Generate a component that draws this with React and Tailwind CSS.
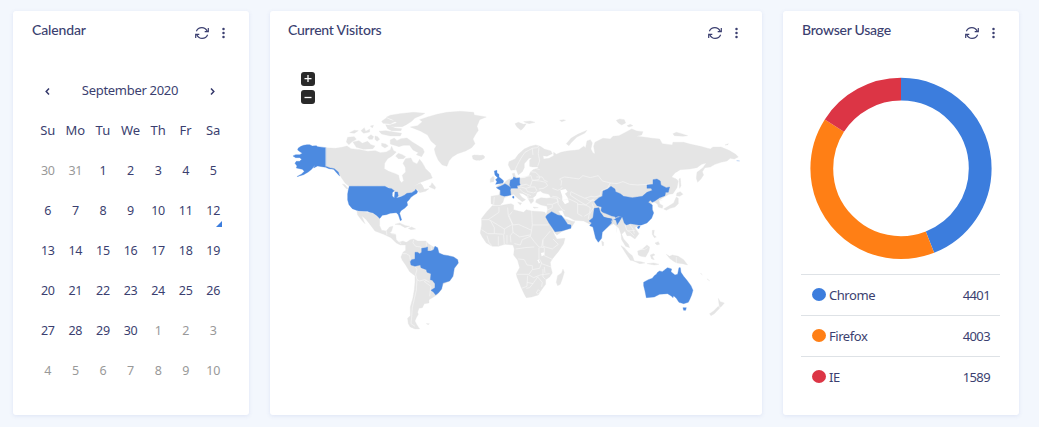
import React from "react";

const LAND = "#e5e5e5";
const ACTIVE = "#4c8ae0";

const northAmerica = [
  // Canadian mainland
  "136,157 165,159 185,156 200,152 212,160 240,163 262,168 285,166 300,172 318,170 330,163 334,153 340,166 348,170 340,178 332,184 322,190 313,204 312,220 325,228 345,235 355,240 358,255 364,262 370,256 366,240 376,230 375,216 368,204 376,190 392,188 398,200 410,206 418,192 426,202 436,220 450,234 456,248 440,254 418,262 402,272 420,264 426,270 432,282 446,280 436,288 418,292 411,282 405,286 390,292 375,300 355,303 330,278 315,272 206,273 195,264 184,248 174,232 155,219 136,214",
  // Arctic islands
  "198,140 202,126 222,124 228,132 214,140 206,148",
  "218,140 236,136 246,144 262,138 272,148 284,152 278,160 250,162 228,156",
  "208,112 222,105 234,106 222,114",
  "242,106 252,97 256,108 268,102 268,110 250,114",
  "270,92 280,90 276,98",
  "262,126 272,118 280,124 276,132 266,132",
  "284,122 292,124 298,132 290,138 284,132",
  "296,108 316,106 340,110 364,114 360,122 330,122 304,116",
  "304,78 318,68 332,74 346,78 330,86 308,84",
  "318,66 330,60 358,55 400,51 434,54 424,60 404,68 394,78 378,88 366,94 340,94 326,90 350,82 334,72",
  "316,88 328,90 344,98 364,100 362,106 334,106 322,100",
  "304,144 316,146 324,152 314,158 304,152",
  "330,134 342,128 350,136 362,130 380,128 396,140 412,150 428,160 432,170 424,184 408,178 414,172 398,164 388,150 370,150 356,154 342,150 330,146",
  "346,182 354,174 366,178 376,184 370,190 354,190",
  "455,262 466,276 464,282 446,274 452,270",
  "186,266 194,268 204,280 198,280",
];

const greenland =
  "210,80 232,76 246,64 238,58 262,50 290,42 320,36 360,33 400,36 402,44 438,50 418,58 410,78 414,90 406,102 398,116 404,130 394,142 376,152 352,160 336,170 326,182 320,198 306,194 294,180 286,162 282,146 288,136 272,122 262,104 240,92";

const centralAmerica = [
  "396,168 402,164 412,168 428,164 434,170 424,178 408,180 398,176",
  "50,332 96,338 108,346 118,356 118,376 124,390 138,392 148,380 158,378 154,392 148,398 166,402 168,418 176,426 188,422 202,428 196,434 180,434 168,428 152,412 130,402 104,392 92,376 78,358 64,346 74,370 66,362 52,344",
  "164,372 178,368 196,376 208,378 194,382 180,374",
  "204,384 214,380 226,386 212,388",
];

const alaska =
  "136,157 112,154 108,151 96,152 88,148 80,148 70,150 62,153 54,158 52,164 60,170 66,174 58,178 46,178 38,182 46,187 58,187 64,192 58,198 48,198 44,204 50,212 48,218 58,220 66,222 72,228 64,236 50,244 70,238 84,230 94,222 104,210 100,218 112,212 124,214 136,216 146,220 160,222 170,234 178,242 174,230 162,220 150,218 136,213";

const unitedStates =
  "207,273 314,273 324,278 334,280 342,286 336,292 336,302 342,308 344,290 352,290 354,302 348,308 362,304 372,300 380,294 394,292 404,286 406,282 412,288 410,294 400,300 392,306 386,314 380,320 382,330 374,338 362,346 358,354 364,374 360,376 354,358 348,352 330,354 318,358 306,360 298,370 290,362 278,354 270,352 262,348 236,348 216,340 206,328 202,314 202,296 204,284";

const southAmerica =
  "90,88 100,86 112,92 136,92 146,102 160,110 168,112 176,128 190,134 204,136 220,140 232,148 234,158 222,174 218,198 208,212 188,222 182,240 172,252 160,260 146,268 146,278 132,280 126,292 116,294 112,306 114,312 108,322 104,332 110,344 118,356 104,356 90,350 84,340 82,324 90,316 90,290 98,262 102,238 104,216 104,196 88,184 76,164 66,150 62,140 68,126 76,120 76,98";
const brazil =
  "104,126 112,126 118,130 124,126 124,114 136,112 142,110 142,122 152,122 160,118 164,108 172,112 176,128 190,134 204,136 220,140 232,148 234,158 222,174 218,198 208,212 188,218 184,236 174,248 166,254 160,246 152,240 164,232 164,220 156,210 150,208 152,190 140,186 138,178 122,172 120,164 104,168 92,164 90,154 94,148 104,146";
const southBorders = [
  "100,88 98,98 106,108 122,110 122,116",
  "66,130 78,130 88,136 90,148",
  "104,168 110,178 106,192 110,208 118,212 134,208 148,216",
  "110,208 108,240 102,266 96,292 94,320 92,340 104,348",
  "138,210 132,214 152,228 150,240 148,258",
  "138,94 138,108",
  "152,106 154,120",
];

const eurasiaLand = [
  // Scandinavia through Siberia, southern edge closed along the Middle East and Asia
  "114,164 116,154 134,146 144,132 162,116 180,108 196,104 210,108 222,116 242,122 246,130 230,138 218,136 220,146 236,144 250,136 250,126 258,132 272,126 290,122 312,120 326,118 340,108 346,112 350,92 360,88 366,98 362,116 368,128 374,130 370,108 374,96 386,90 398,84 420,86 428,78 446,76 466,66 484,56 500,62 518,64 514,74 498,78 520,80 546,84 568,86 576,100 606,104 608,96 640,96 662,102 690,108 720,116 728,110 752,110 776,120 796,132 804,140 792,146 780,144 770,152 752,156 734,162 720,170 704,172 696,184 700,194 692,206 682,216 678,204 680,186 698,172 708,158 694,162 680,172 658,176 630,178 614,188 604,200 618,206 624,212 620,232 608,250 596,252 578,262 566,270 568,280 578,286 576,294 564,290 562,282 554,276 544,276 544,290 550,306 536,328 516,342 504,346 494,352 506,370 494,386 480,376 470,376 464,362 454,372 460,386 474,402 478,412 466,408 454,388 452,372 446,354 430,340 416,348 394,364 392,380 386,394 376,378 366,346 352,338 340,332 312,330 294,320 284,318 276,300 264,302 274,318 286,326 304,332 314,334 304,350 274,364 260,374 252,366 236,342 226,318 232,298 230,288 212,284 196,276 198,268 212,262 230,264 242,262 236,252 218,248 210,242 200,246 196,256 188,262 190,272 182,280 176,270 170,258 158,250 146,248 154,260 166,268 156,274 142,264 130,252 116,256 102,262 98,276 90,284 74,284 62,280 62,258 86,254 90,240 78,230 88,222 102,218 110,210 118,206 130,204 126,190 132,188 136,200 152,204 164,202 176,196 180,186 188,178 202,174 204,170 186,170 178,168 178,150 184,142 176,144 162,160 162,172 156,184 144,194 138,178 122,180",
  // Arctic islands
  "134,40 144,36 160,42 168,40 160,52 152,60 140,50",
  "160,34 180,32 194,36 176,40",
  "268,30 280,28 286,30 274,34",
  "288,100 302,84 322,72 350,60 344,68 320,80 302,98 296,106",
  "438,30 448,26 462,28 466,38 454,44 444,38",
  "470,46 480,42 488,46 476,50",
  "608,70 618,66 634,70 652,76 638,78 612,76",
  "764,104 774,100 772,104",
  "6,136 20,134 40,138 42,144 28,150 14,148",
  // British Isles and the Mediterranean
  "60,206 68,198 72,202 70,214 60,216",
  "142,276 154,278 150,284",
  "188,290 204,292 192,294",
  // Japan and Sakhalin
  "626,206 630,204 632,226 628,234",
  "620,248 630,244 638,252 628,258 618,256",
  "618,260 624,264 624,280 614,290 600,294 588,300 580,296 594,288 610,278",
  // Madagascar, Sri Lanka
  "278,476 282,486 276,506 270,522 262,526 258,516 262,496 274,488",
  "394,392 400,396 400,406 396,406",
  // Indonesian and Philippine islands
  "452,406 462,412 476,428 486,436 492,452 480,450 468,432",
  "490,452 512,454 524,458 508,460",
  "502,422 514,418 530,404 538,410 536,422 526,440 512,438 504,434",
  "540,434 550,430 554,434 546,438 552,448 544,446",
  "546,360 552,360 550,374 558,380 552,382 546,372",
  "554,398 564,394 568,402 560,404",
  "530,460 550,458 566,462 552,464",
  "588,432 598,438 606,434 624,438 640,448 652,464 636,460 620,458 612,454 600,446",
  // New Zealand
  "744,564 750,574 762,578 754,588 748,592 746,580",
  "744,588 748,594 732,610 722,616 718,610 730,602",
  "710,506 718,512 714,508",
  "690,488 696,494 692,490",
];

const africa =
  "66,286 88,286 122,280 130,284 130,298 144,302 160,306 168,298 184,302 216,304 224,306 236,334 246,358 254,376 260,386 284,384 280,400 264,424 246,446 240,456 242,472 246,488 238,500 226,508 226,522 214,538 204,554 184,560 168,562 162,552 152,530 140,500 138,490 148,472 142,450 130,434 132,416 128,404 104,402 84,408 66,408 48,398 36,380 30,368 34,344 34,324 48,306";

const borders = [
  // Africa
  "86,290 86,306 54,328 34,328",
  "54,328 60,330 72,352 72,370 52,370 34,358",
  "60,330 102,356 126,342 114,316 112,292",
  "126,304 116,316 128,344 144,342",
  "184,302 186,344 236,344",
  "144,342 184,360 186,344",
  "126,344 128,366 120,376 122,396",
  "184,360 180,378 192,394 206,410 222,412",
  "128,366 148,380 180,374",
  "72,370 102,372 102,356",
  "84,378 84,406",
  "100,374 102,402",
  "110,374 110,400",
  "50,376 56,396 64,406",
  "132,400 150,404 156,388 180,378",
  "136,416 152,414 164,412 192,410",
  "214,410 218,388 240,362",
  "218,388 218,408 246,416 264,402 248,386",
  "222,412 222,436 248,448",
  "206,412 206,444 214,458 208,474 186,478",
  "144,446 162,448 170,464 186,466 186,478",
  "186,478 176,492 140,492",
  "176,494 190,502 210,494 238,490",
  "172,496 170,528 154,534",
  "170,516 188,520 202,500",
  "202,500 216,516 214,530",
  "188,520 178,532 168,534",
  "214,460 242,470",
  "222,470 224,488",
  "218,476 218,500 226,508",
  "198,548 204,538 210,544 204,552 198,548",
  // Europe
  "134,180 142,162 152,144 164,126 186,114 200,112 206,108",
  "206,112 204,130 208,152 202,168",
  "186,114 188,134",
  "98,256 110,260",
  "126,198 122,204 120,224 122,234",
  "148,204 148,226 168,222 180,228 186,210 182,196 150,202",
  "180,184 196,186 208,198 206,208 186,210",
  "186,210 208,212 226,216 232,226 220,234 206,236",
  "122,236 138,234 152,230 166,234 182,230",
  "148,236 158,246 172,252 182,256",
  "166,234 172,244 190,248 198,244",
  "172,252 174,266 188,264",
  "182,230 194,230 200,242",
  "194,174 208,178",
  "72,260 70,282",
  "198,200 216,200 222,210 232,214",
  // Middle East and Central Asia
  "246,234 262,240 272,236 276,230",
  "242,262 260,264 264,274 246,282 230,282",
  "246,258 260,260 270,266",
  "246,282 246,292 230,300",
  "260,264 264,282 276,298 284,302",
  "276,270 296,266 322,278 322,310 336,318",
  "272,226 274,212 268,206 282,200 298,202 326,206 338,196 360,202 384,196 396,212 420,218",
  "420,218 412,234 392,242 390,256 374,260 362,258 344,264 326,256 302,244 300,256",
  "302,256 326,272 346,284 322,282",
  "346,284 366,270 374,272",
  "346,264 358,272 372,266",
  "346,284 360,292 358,308 342,318",
  "366,280 370,292 356,314 354,326",
  "420,218 440,220 458,214 478,222 502,224 532,222 538,220",
  "274,362 266,348 300,338",
  "440,350 438,366",
  "464,344 470,360 480,366 492,378",
  "476,340 488,356 492,370",
  "472,362 494,360",
  "568,270 576,270",
  "618,440 618,458",
  "510,416 522,418 532,412",
];

const eurasiaActive = [
  // United Kingdom
  "72,182 80,180 80,188 86,192 86,200 94,206 100,212 98,218 86,220 76,222 80,214 76,208 82,202 74,194",
  // France
  "78,232 90,228 98,224 104,220 114,226 122,232 120,240 122,254 112,256 102,258 90,254 90,240",
  "127,258 131,258 131,264 127,263",
  // Germany
  "120,210 128,206 130,200 138,204 148,202 148,218 150,224 140,226 142,234 122,234 118,224",
  // Saudi Arabia
  "226,320 230,314 244,304 262,314 274,316 284,330 292,342 302,344 302,354 274,362 254,364 246,352 236,338",
  // China
  "372,274 386,262 396,258 398,242 412,236 422,228 434,236 436,244 450,250 460,258 486,262 516,258 530,246 546,240 542,234 530,234 530,224 548,222 548,208 560,206 570,212 572,224 588,232 598,230 594,246 586,246 584,256 568,262 554,272 546,276 540,270 534,276 546,284 546,298 550,308 544,324 530,338 514,344 504,344 492,342 480,340 468,344 462,338 456,320 444,318 434,322 412,318 400,312 392,300 394,290 380,286",
  "503,348 510,346 506,355 501,353",
  // India
  "372,294 386,292 390,306 402,320 424,324 428,330 440,322 456,318 448,332 440,344 434,336 422,330 424,338 412,350 396,366 394,384 384,396 376,384 368,350 358,346 364,338 356,332 368,322",
  // Australia
  "520,516 534,508 546,504 552,496 558,492 562,486 568,482 576,484 582,480 586,476 592,472 604,476 602,484 614,494 622,492 626,472 630,472 632,486 640,498 650,510 662,526 668,540 664,554 658,568 654,576 640,580 626,576 618,564 610,556 608,562 604,558 592,550 568,552 552,560 528,562 524,542 520,526",
  "638,592 648,592 646,600 640,600",
];

const nepal = "394,306 406,310 424,318 434,320 434,326 414,322 400,318";
const bangladesh = "425,327 436,330 440,343 430,340";

const Shapes = ({ list, fill }) =>
  list.map((points) => (
    <polygon key={points} points={points} fill={fill} stroke={fill} strokeWidth="1" strokeLinejoin="round" />
  ));

const Borders = ({ list }) =>
  list.map((points) => (
    <polyline key={points} points={points} fill="none" stroke="#f6f6f6" strokeWidth="2" strokeLinejoin="round" />
  ));

function WorldMap() {
  return (
    <svg viewBox="288 100 456 240" className="block h-[240px] w-[456px]" role="img" aria-label="Visitors by country">
      <g transform="translate(280.3 95.3) scale(.33333)">
        <Shapes list={northAmerica} fill={LAND} />
        <Shapes list={[alaska, unitedStates]} fill={ACTIVE} />
        <polyline points="137,156 137,214" stroke="#c9d9ef" strokeWidth="2" />
      </g>
      <g transform="translate(340.3 100.3) scale(.33333)">
        <Shapes list={[greenland, ...centralAmerica]} fill={LAND} />
        <Borders list={["138,392 140,404", "154,400 166,402", "176,420 182,432"]} />
      </g>
      <g transform="translate(380.3 210.3) scale(.33333)">
        <Shapes list={[southAmerica, "138,340 147,340 144,343"]} fill={LAND} />
        <Borders list={southBorders} />
        <Shapes list={[brazil]} fill={ACTIVE} />
      </g>
      <g transform="translate(470.3 110.3) scale(.33333)">
        <Shapes list={[...eurasiaLand, africa]} fill={LAND} />
        {/* Seas and lakes */}
        <polygon points="270,240 286,236 292,244 284,250 292,262 296,276 284,282 276,270 276,258" fill="#fff" />
        <polygon points="212,428 222,426 222,434 214,438" fill="#fff" />
        <polygon points="204,446 208,456 206,460 202,450" fill="#fff" />
        <Borders list={borders} />
        <Shapes list={eurasiaActive} fill={ACTIVE} />
        <Shapes list={[nepal, bangladesh]} fill={LAND} />
        <polyline points="799,151 808,152" stroke={ACTIVE} strokeWidth="1.5" opacity=".7" />
      </g>
    </svg>
  );
}

function HeaderIcons() {
  return (
    <div className="flex items-center">
      <svg viewBox="0 0 14 12" className="h-3 w-3.5" fill="none" stroke="#3b3f70" strokeWidth="1.2">
        <path d="M1.4 4.3C2.3 2 4.4.7 6.9.7c2.3 0 4.1 1.2 5.2 3.4M13.3.9v3.7H9.7M12.6 7.7c-.9 2.3-3 3.6-5.5 3.6-2.3 0-4.1-1.2-5.2-3.4M.7 11.1V7.4h3.6" />
      </svg>
      <svg viewBox="0 0 3 12" className="ml-[13px] h-3 w-[3px]" fill="#3b3f70">
        <circle cx="1.5" cy="2" r="1.25" />
        <circle cx="1.5" cy="6" r="1.25" />
        <circle cx="1.5" cy="10" r="1.25" />
      </svg>
    </div>
  );
}

function Card({ title, width, titleClass, children }) {
  return (
    <section className={`h-[404px] shrink-0 rounded-[3px] bg-white shadow-[0_1px_4px_rgba(70,100,190,0.12)] ${width}`}>
      <header className="flex h-11 items-center justify-between pr-6 pl-[18px]">
        <h2 className={`-mt-[7px] text-[14px] leading-5 font-medium whitespace-nowrap font-['Lato',sans-serif] ${titleClass}`}>
          {title}
        </h2>
        <HeaderIcons />
      </header>
      {children}
    </section>
  );
}

const weekdays = ["Su", "Mo", "Tu", "We", "Th", "Fr", "Sa"];
const days = [
  30, 31, ...Array.from({ length: 30 }, (_, i) => i + 1), ...Array.from({ length: 10 }, (_, i) => i + 1),
];

function Chevron({ d }) {
  return (
    <svg viewBox="0 0 5 7" className="mt-px h-[7px] w-[5px]" fill="none" stroke="#34386a" strokeWidth="1.5">
      <path d={d} />
    </svg>
  );
}

function Calendar() {
  return (
    <div className="mt-4 ml-[21px] w-[193px] text-[13px]">
      <div className="flex h-10 items-center justify-between pr-3 pl-[11px]">
        <Chevron d="M4 .6 1.2 3.5 4 6.4" />
        <span className="tracking-[-0.3px]">September 2020</span>
        <Chevron d="M1 .6 3.8 3.5 1 6.4" />
      </div>
      <div className="grid grid-cols-7 text-center">
        {weekdays.map((day) => (
          <span key={day} className="h-10 leading-[39px]">{day}</span>
        ))}
        {days.map((day, i) => (
          <span
            key={i}
            className={`relative h-10 text-[12.5px] leading-10 tracking-[-0.3px] ${i < 2 || i > 31 ? "text-[#999]" : ""}`}
          >
            {day}
            {i === 13 && (
              <svg viewBox="0 0 6 6" className="absolute right-[5px] bottom-1 size-[6px]" fill="#3c7ddd">
                <path d="M6 0v6H0z" />
              </svg>
            )}
          </span>
        ))}
      </div>
    </div>
  );
}

const browsers = [
  { name: "Chrome", count: 4401, color: "#3c7ddd" },
  { name: "Firefox", count: 4003, color: "#ff7f15" },
  { name: "IE", count: 1589, color: "#dc3545" },
];
const total = browsers.reduce((sum, b) => sum + b.count, 0);

function Donut() {
  let start = 0;
  return (
    <svg viewBox="0 -.4 182 182" className="mt-[22px] ml-[27px] block size-[182px]">
      <g transform="rotate(-90 91 91)" fill="none" strokeWidth="22.8">
        {browsers.map((b) => {
          const share = (b.count / total) * 100;
          const arc = (
            <circle
              key={b.name}
              cx="91"
              cy="91"
              r="79.2"
              pathLength="100"
              stroke={b.color}
              strokeDasharray={`${share} ${100 - share}`}
              strokeDashoffset={-start}
            />
          );
          start += share;
          return arc;
        })}
      </g>
    </svg>
  );
}

export default function App() {
  return (
    <main className="flex h-[427px] w-[1039px] gap-[21px] overflow-hidden bg-[#f3f7fd] pt-[11px] pl-[13px] text-[#3b3f70] font-['Noto_Sans',sans-serif]">
      <Card title="Calendar" width="w-[236px]" titleClass="pl-px tracking-[-0.15px]">
        <Calendar />
      </Card>
      <Card title="Current Visitors" width="w-[492px]" titleClass="tracking-[-0.22px]">
        <div className="mt-[17px] ml-[31px] flex w-3.5 flex-col gap-1">
          {["M3.5 6.6h7M7 3.1v7", "M3.5 7.5h7"].map((d) => (
            <button key={d} className="size-3.5 rounded-[3px] bg-[#292929]">
              <svg viewBox="0 0 14 14" stroke="#fff" strokeWidth="1.3">
                <path d={d} />
              </svg>
            </button>
          ))}
        </div>
        <div className="-mt-1 ml-[18px]">
          <WorldMap />
        </div>
      </Card>
      <Card title="Browser Usage" width="w-[236px]" titleClass="pl-px tracking-[-0.25px]">
        <Donut />
        <ul className="mx-[18px] mt-[15px] w-[199px] text-[13px]">
          {browsers.map((b) => (
            <li key={b.name} className="flex h-[41px] items-center border-t border-[#dee2e6] pr-[10px] pl-[11px]">
              <svg viewBox="0 0 14 13" className="-mt-px h-[13px] w-3.5" fill={b.color}>
                <ellipse cx="7" cy="6.5" rx="7" ry="6.5" />
              </svg>
              <span className="mt-0.5 ml-[3px] tracking-[-0.45px]">{b.name}</span>
              <span className="mt-0.5 ml-auto tracking-[-0.6px]">{b.count}</span>
            </li>
          ))}
        </ul>
      </Card>
    </main>
  );
}
